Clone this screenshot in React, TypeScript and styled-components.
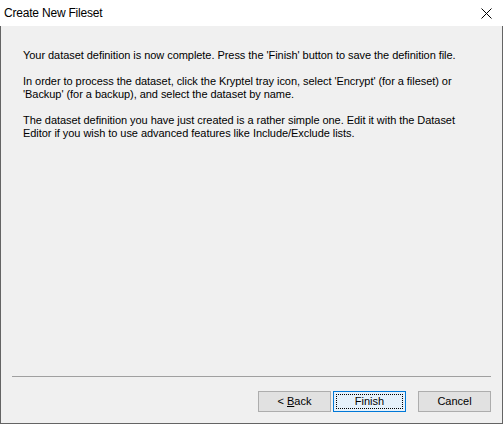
import React from "react";
import styled, { createGlobalStyle } from "styled-components";

const Global = createGlobalStyle`
  html, body { margin: 0; padding: 0; background: #f0f0f0; }
  body { font-family: "Liberation Sans", Arial, sans-serif; }
`;

const Window = styled.div`
  width: 503px;
  height: 424px;
  display: flex;
  flex-direction: column;
  box-sizing: border-box;
  font-family: "Liberation Sans", Arial, sans-serif;
  font-size: 11px;
  color: #000;
`;

const TitleBar = styled.div`
  height: 26px;
  flex: none;
  background: #ffffff;
  display: flex;
  align-items: center;
  justify-content: space-between;
  padding-left: 4px;
  box-sizing: border-box;
`;

const Title = styled.span`
  font-size: 12px;
  letter-spacing: -0.2px;
  line-height: 16px;
`;

const CloseButton = styled.div`
  width: 46px;
  height: 26px;
  display: flex;
  align-items: center;
  justify-content: center;
  margin-right: -6px;
`;

const Body = styled.div`
  flex: 1;
  display: flex;
  flex-direction: column;
  background: #f0f0f0;
  border: 1px solid #646464;
  border-top: none;
  box-sizing: border-box;
`;

const Content = styled.div`
  flex: 1;
  padding: 23px 10px 0 22px;
`;

const Paragraph = styled.p`
  margin: 0 0 13px 0;
  line-height: 13px;
  font-size: 11px;
  letter-spacing: -0.05px;
  white-space: nowrap;
`;

const Separator = styled.div`
  height: 1px;
  background: #a0a0a0;
  margin: 0 11px;
`;

const ButtonRow = styled.div`
  display: flex;
  justify-content: flex-end;
  padding: 14px 11px 11px 0;
`;

const Button = styled.button<{ $primary?: boolean; $gap?: number }>`
  width: 73px;
  height: 21px;
  box-sizing: border-box;
  margin-left: ${(p) => p.$gap ?? 0}px;
  background: ${(p) => (p.$primary ? "#e5f1fb" : "#e1e1e1")};
  border: 1px solid ${(p) => (p.$primary ? "#0078d7" : "#adadad")};
  border-radius: 0;
  padding: 0;
  font-family: "Liberation Sans", Arial, sans-serif;
  font-size: 11px;
  line-height: 15px;
  color: #000;
  position: relative;
  display: flex;
  align-items: center;
  justify-content: center;
`;

const FocusRing = styled.span`
  position: absolute;
  inset: 2px;
  border: 1px dotted #000;
  pointer-events: none;
`;

const Mnemonic = styled.span`
  text-decoration: underline;
  text-underline-offset: 1px;
`;

export default function App() {
  return (
    <>
      <Global />
      <Window>
        <TitleBar>
          <Title>Create New Fileset</Title>
          <CloseButton>
            <svg width="11" height="11" viewBox="0 0 11 11">
              <path d="M0.5 0.5 L10.5 10.5 M10.5 0.5 L0.5 10.5" stroke="#000" strokeWidth="1" fill="none" />
            </svg>
          </CloseButton>
        </TitleBar>
        <Body>
          <Content>
            <Paragraph>
              Your dataset definition is now complete. Press the 'Finish' button to save the definition file.
            </Paragraph>
            <Paragraph>
              In order to process the dataset, click the Kryptel tray icon, select 'Encrypt' (for a fileset) or
              <br />
              'Backup' (for a backup), and select the dataset by name.
            </Paragraph>
            <Paragraph>
              The dataset definition you have just created is a rather simple one. Edit it with the Dataset
              <br />
              Editor if you wish to use advanced features like Include/Exclude lists.
            </Paragraph>
          </Content>
          <Separator />
          <ButtonRow>
            <Button>
              &lt;&nbsp;<Mnemonic>B</Mnemonic>ack
            </Button>
            <Button $primary $gap={2}>
              Finish
              <FocusRing />
            </Button>
            <Button $gap={12}>Cancel</Button>
          </ButtonRow>
        </Body>
      </Window>
    </>
  );
}
